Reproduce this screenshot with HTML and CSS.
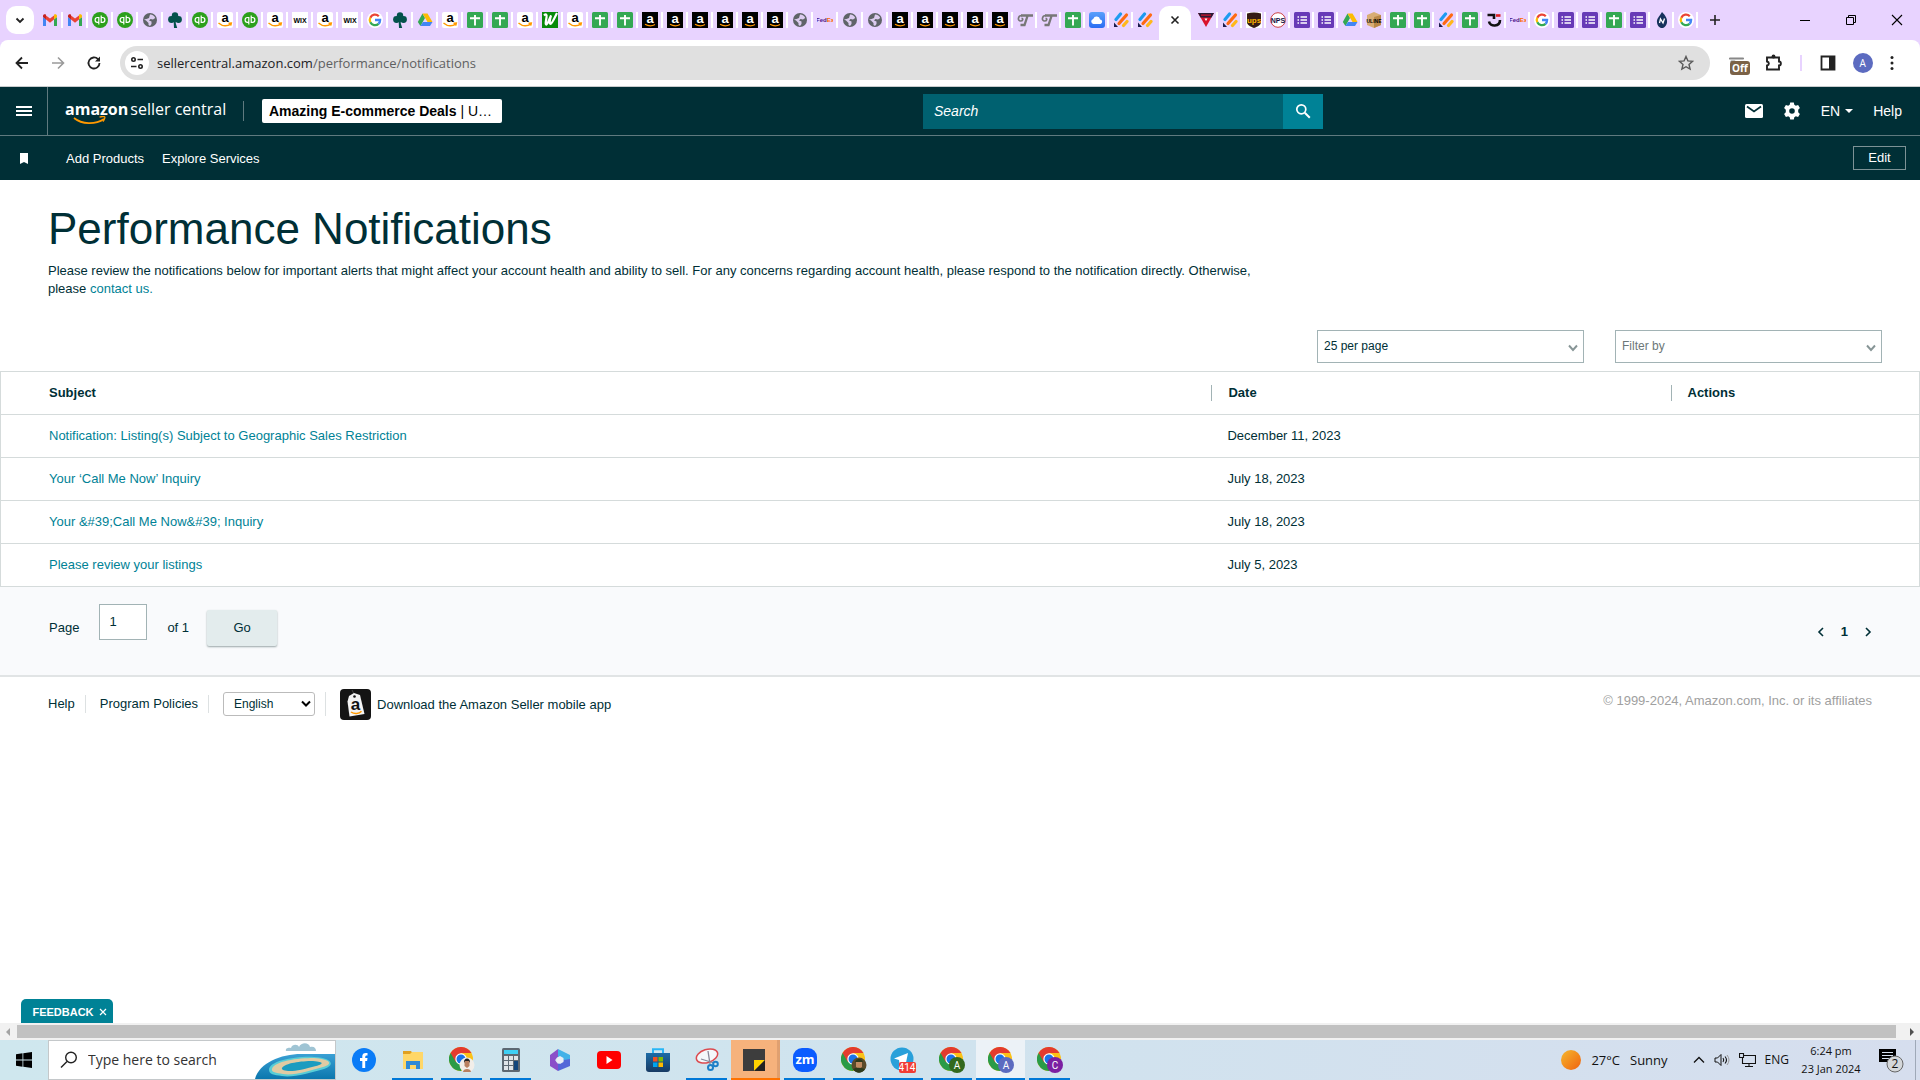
FILE: index.html
```html
<!DOCTYPE html>
<html lang="en">
<head>
<meta charset="utf-8">
<meta name="viewport" content="width=device-width, initial-scale=1">
<title>Performance Notifications</title>
<link rel="stylesheet" href="styles.css">
</head>
<body>
<svg class="paints" aria-hidden="true">
  <defs>
    <linearGradient id="cloudfill" x1="0" y1="0" x2="0" y2="1"><stop offset="0" stop-color="#5aa0fb"/><stop offset="1" stop-color="#2b6df3"/></linearGradient>
    <linearGradient id="sunfill" x1="0" y1="0" x2="1" y2="1"><stop offset="0" stop-color="#f5b82e"/><stop offset="1" stop-color="#f0620f"/></linearGradient>
    <linearGradient id="seafill" x1="0" y1="0" x2="0" y2="1"><stop offset="0" stop-color="#3aa0d4"/><stop offset="1" stop-color="#0b77ae"/></linearGradient>
    <linearGradient id="storefill" x1="0" y1="0" x2="0" y2="1"><stop offset="0" stop-color="#1c6ba6"/><stop offset="1" stop-color="#173a63"/></linearGradient>
  </defs>
</svg>
<svg class="symbols" aria-hidden="true">
  <symbol id="gm" viewBox="0 0 16 16"><path fill="#4285f4" d="M1 14V5l3 2.300V14z"/><path fill="#34a853" d="M12 14V7.300L15 5v9z"/><path fill="#ea4335" d="M4 3.500 8 6.600l4-3.100v4L8 10.700 4 7.500z"/><path fill="#c5221f" d="M1 5V4c0-1.700 1.800-2.200 3-1.300v4.800z"/><path fill="#fbbc04" d="M12 7.500V2.700c1.200-.9 3-.4 3 1.300v1z"/></symbol>
  <symbol id="qb" viewBox="0 0 16 16"><circle cx="8" cy="8" r="8" fill="#2ca01c"/><path d="M6.800 5.500H5.500a2.300 2.300 0 0 0 0 4.800H6.800M6.800 5v7.500M9.200 3.500V11M9.200 5.500h1.300a2.300 2.300 0 0 1 0 4.800H9.200" fill="none" stroke="#fff" stroke-width="1.200"/></symbol>
  <symbol id="gl" viewBox="0 0 16 16"><circle cx="8" cy="8" r="7" fill="#5f6368"/><path fill="#dccbef" d="M8 2.500c2-.2 4.500 1 5.200 3.500L11 7.500 8.500 7 7 8.500l2.500 1V12l-1.500 2-1.500-1V11L4 8.500 2 7.500l2.500-.5L7 6z"/></symbol>
  <symbol id="cl" viewBox="0 0 16 16"><g fill="#04524c"><circle cx="8" cy="3.500" r="3.200"/><circle cx="4.500" cy="7.500" r="3.400"/><circle cx="11.500" cy="7.500" r="3.400"/><path d="M6.500 6h3l-.8 5 1.500 5H7z"/></g></symbol>
  <symbol id="al" viewBox="0 0 16 16"><rect width="16" height="16" rx="2" fill="#fff"/><text x="8" y="10" text-anchor="middle" class="glyph-a">a</text><path d="M1.500 11c4 3.500 9 3.300 12.500.8M11.500 11.300l2.800-.3-.6 2.600" fill="none" stroke="#f90" stroke-width="1.500"/></symbol>
  <symbol id="ad" viewBox="0 0 16 16"><rect width="16" height="16" fill="#000"/><text x="8" y="11" text-anchor="middle" class="glyph-a" fill="#fff">a</text><path d="M3 12.300c3.500 2 7 2 10 .2" fill="none" stroke="#f90" stroke-width="1.200"/></symbol>
  <symbol id="wx" viewBox="0 0 16 16"><rect width="16" height="16" fill="#fff"/><text x="8" y="10.500" text-anchor="middle" class="glyph-xs">WIX</text></symbol>
  <symbol id="gg" viewBox="0 0 16 16"><circle cx="8" cy="8" r="8" fill="#fff"/><g fill="none" stroke-width="2.300"><path stroke="#ea4335" d="M11.800 4.200A5.200 5.200 0 0 0 3.300 5.700"/><path stroke="#fbbc05" d="M3.300 5.700a5.200 5.200 0 0 0 0 4.600"/><path stroke="#34a853" d="M3.300 10.300a5.200 5.200 0 0 0 8.200 1.500"/><path stroke="#4285f4" d="M11.500 11.800A5 5 0 0 0 13.100 8H8"/></g></symbol>
  <symbol id="dr" viewBox="0 0 16 16"><path fill="#34a853" d="M5.500 1.500 8 6 3.500 14 .8 10z"/><path fill="#fbbc04" d="M5.500 1.500h5L15.500 10h-5z"/><path fill="#4285f4" d="M3.300 14 6 10h9.500L13 14z"/></symbol>
  <symbol id="sh" viewBox="0 0 16 16"><rect width="16" height="16" rx="1.500" fill="#34a853"/><path d="M3 6.200h10M8 3v10.500" stroke="#fff" stroke-width="1.900"/></symbol>
  <symbol id="fm" viewBox="0 0 16 16"><rect width="16" height="16" rx="1.500" fill="#673ab7"/><path d="M6.500 5H13M6.500 8H13M6.500 11H13M3.500 5H5M3.500 8H5M3.500 11H5" stroke="#fff" stroke-width="1.500"/></symbol>
  <symbol id="wg" viewBox="0 0 16 16"><rect width="16" height="16" fill="#078a0a"/><path d="M2 3.500c2-2 3-1 2.500 2S3 13 4.500 12.500 8 5 9 3.500C8 7 7 12 8.500 12S13 5 15 1" fill="none" stroke="#fff" stroke-width="2.200"/></symbol>
  <symbol id="fx" viewBox="0 0 16 16"><text x="8" y="10" text-anchor="middle" class="glyph-fx" fill="#4d148c">Fed<tspan fill="#ff6600">Ex</tspan></text></symbol>
  <symbol id="tt" viewBox="0 0 16 16"><path d="M4 3.500h12M10.500 4 7.500 13H3.500" fill="none" stroke="#777" stroke-width="2.300"/><path d="M5 3.500C.5 3.500.5 9 3.500 9 6 9 6.500 6.500 4.500 6.300" fill="none" stroke="#777" stroke-width="1.700"/></symbol>
  <symbol id="ic" viewBox="0 0 16 16"><rect width="16" height="16" rx="3" fill="url(#cloudfill)"/><path fill="#fff" d="M4.500 12a2.600 2.600 0 0 1-.3-5.100 3.600 3.600 0 0 1 6.900.6A2.300 2.300 0 0 1 11.500 12z"/></symbol>
  <symbol id="st" viewBox="0 0 16 16"><g stroke-width="3.200" stroke-linecap="round"><path stroke="#1e9bf0" d="M3 7.500 7.500 2"/><path stroke="#ff6a13" d="M6 11.500 13.500 3"/><path stroke="#ffb81c" d="m10.500 13.500 3.500-4"/></g><path fill="#1b1b4b" d="M1 10.500V15h4z"/></symbol>
  <symbol id="tr" viewBox="0 0 16 16"><path fill="#d9132c" d="M0 1h16L8 15z"/><path fill="#2a1c38" d="M0 1h16l-2.500 4.500h-11z"/><path fill="#d9132c" d="M3 2.500h10v1.200H3z"/><path fill="#fff" d="M6.500 6.500h3L8 9z"/></symbol>
  <symbol id="up" viewBox="0 0 16 16"><path fill="#fff" d="M0 0h16v16H0z"/><path fill="#351c15" d="M1 1.500c5-1.500 9-1.500 14 0V10c0 3-3 4.500-7 6-4-1.500-7-3-7-6z"/><text x="8" y="11" text-anchor="middle" class="glyph-ups" fill="#ffb500">ups</text></symbol>
  <symbol id="np" viewBox="0 0 16 16"><circle cx="8" cy="8" r="7.300" fill="#fff" stroke="#c44" stroke-width="1"/><text x="8" y="10.500" text-anchor="middle" class="glyph-xs" fill="#114">NPS</text></symbol>
  <symbol id="ul" viewBox="0 0 16 16"><path fill="#d8ad74" d="m8 0 7 3v10l-7 3-7-3V3z"/><path fill="#b98848" d="m8 5 7-2v10l-7 3z"/><text x="8" y="11" text-anchor="middle" class="glyph-ul">ULINE</text></symbol>
  <symbol id="tc" viewBox="0 0 16 16"><path d="M1.500 3H8v4M14 8c0 7-10 7-11 1.500" fill="none" stroke="#111" stroke-width="2.600"/><path d="M10 3.500h4.500" stroke="#d22" stroke-width="2.600"/></symbol>
  <symbol id="nl" viewBox="0 0 16 16"><path fill="#16325c" d="M8 0c4 4 5.500 7 5 10.500S10 16 8 16s-4.500-1.500-5-5.500S5 5 8 0z"/><path d="m5.500 11 1-4 2.500 4 1.500-4.500" fill="none" stroke="#fff" stroke-width="1.300"/></symbol>
  <symbol id="chrome" viewBox="0 0 24 24"><circle cx="12" cy="12" r="12" fill="#fbc116"/><path fill="#2a9b47" d="M1.600 6A12 12 0 0 0 12 24l5.200-9z"/><path fill="#e33b2e" d="M1.600 6 6.800 15 12 6h10.400A12 12 0 0 0 1.600 6z"/><circle cx="12" cy="12" r="5.700" fill="#fff"/><circle cx="12" cy="12" r="4.500" fill="#1a73e8"/></symbol>
</svg>

<header class="browser">
  <div class="tabstrip">
    <button class="tab-search" aria-label="Search tabs"><svg width="12" height="12" viewBox="0 0 12 12"><path d="m2.500 4.500 3.500 3.500 3.500-3.500" fill="none" stroke="#222" stroke-width="1.800"/></svg></button>
    <div class="tabs">
      <button class="tab" aria-label="Gmail"><svg><use href="#gm"/></svg></button>
      <button class="tab" aria-label="Gmail"><svg><use href="#gm"/></svg></button>
      <button class="tab" aria-label="QuickBooks"><svg><use href="#qb"/></svg></button>
      <button class="tab" aria-label="QuickBooks"><svg><use href="#qb"/></svg></button>
      <button class="tab" aria-label="Website"><svg><use href="#gl"/></svg></button>
      <button class="tab" aria-label="Clover"><svg><use href="#cl"/></svg></button>
      <button class="tab" aria-label="QuickBooks"><svg><use href="#qb"/></svg></button>
      <button class="tab" aria-label="Amazon"><svg><use href="#al"/></svg></button>
      <button class="tab" aria-label="QuickBooks"><svg><use href="#qb"/></svg></button>
      <button class="tab" aria-label="Amazon"><svg><use href="#al"/></svg></button>
      <button class="tab" aria-label="Wix"><svg><use href="#wx"/></svg></button>
      <button class="tab" aria-label="Amazon"><svg><use href="#al"/></svg></button>
      <button class="tab" aria-label="Wix"><svg><use href="#wx"/></svg></button>
      <button class="tab" aria-label="Google"><svg><use href="#gg"/></svg></button>
      <button class="tab" aria-label="Clover"><svg><use href="#cl"/></svg></button>
      <button class="tab" aria-label="Drive"><svg><use href="#dr"/></svg></button>
      <button class="tab" aria-label="Amazon"><svg><use href="#al"/></svg></button>
      <button class="tab" aria-label="Sheets"><svg><use href="#sh"/></svg></button>
      <button class="tab" aria-label="Sheets"><svg><use href="#sh"/></svg></button>
      <button class="tab" aria-label="Amazon"><svg><use href="#al"/></svg></button>
      <button class="tab" aria-label="Web store"><svg><use href="#wg"/></svg></button>
      <button class="tab" aria-label="Amazon"><svg><use href="#al"/></svg></button>
      <button class="tab" aria-label="Sheets"><svg><use href="#sh"/></svg></button>
      <button class="tab" aria-label="Sheets"><svg><use href="#sh"/></svg></button>
      <button class="tab" aria-label="Seller Central"><svg><use href="#ad"/></svg></button>
      <button class="tab" aria-label="Seller Central"><svg><use href="#ad"/></svg></button>
      <button class="tab" aria-label="Seller Central"><svg><use href="#ad"/></svg></button>
      <button class="tab" aria-label="Seller Central"><svg><use href="#ad"/></svg></button>
      <button class="tab" aria-label="Seller Central"><svg><use href="#ad"/></svg></button>
      <button class="tab" aria-label="Seller Central"><svg><use href="#ad"/></svg></button>
      <button class="tab" aria-label="Website"><svg><use href="#gl"/></svg></button>
      <button class="tab" aria-label="FedEx"><svg><use href="#fx"/></svg></button>
      <button class="tab" aria-label="Website"><svg><use href="#gl"/></svg></button>
      <button class="tab" aria-label="Website"><svg><use href="#gl"/></svg></button>
      <button class="tab" aria-label="Seller Central"><svg><use href="#ad"/></svg></button>
      <button class="tab" aria-label="Seller Central"><svg><use href="#ad"/></svg></button>
      <button class="tab" aria-label="Seller Central"><svg><use href="#ad"/></svg></button>
      <button class="tab" aria-label="Seller Central"><svg><use href="#ad"/></svg></button>
      <button class="tab" aria-label="Seller Central"><svg><use href="#ad"/></svg></button>
      <button class="tab narrow" aria-label="T store"><svg><use href="#tt"/></svg></button>
      <button class="tab narrow" aria-label="T store"><svg><use href="#tt"/></svg></button>
      <button class="tab narrow" aria-label="Sheets"><svg><use href="#sh"/></svg></button>
      <button class="tab narrow" aria-label="iCloud"><svg><use href="#ic"/></svg></button>
      <button class="tab narrow" aria-label="Jungle Scout"><svg><use href="#st"/></svg></button>
      <button class="tab narrow last" aria-label="Jungle Scout"><svg><use href="#st"/></svg></button>
      <button class="tab active" aria-label="Close tab"><svg width="10" height="10" viewBox="0 0 10 10"><path d="m1.500 1.500 7 7m0-7-7 7" stroke="#222" stroke-width="1.600"/></svg></button>
      <button class="tab narrow" aria-label="Supplier"><svg><use href="#tr"/></svg></button>
      <button class="tab narrow" aria-label="Jungle Scout"><svg><use href="#st"/></svg></button>
      <button class="tab narrow" aria-label="UPS"><svg><use href="#up"/></svg></button>
      <button class="tab narrow" aria-label="NPS"><svg><use href="#np"/></svg></button>
      <button class="tab narrow" aria-label="Forms"><svg><use href="#fm"/></svg></button>
      <button class="tab narrow" aria-label="Forms"><svg><use href="#fm"/></svg></button>
      <button class="tab narrow" aria-label="Drive"><svg><use href="#dr"/></svg></button>
      <button class="tab narrow" aria-label="Uline"><svg><use href="#ul"/></svg></button>
      <button class="tab narrow" aria-label="Sheets"><svg><use href="#sh"/></svg></button>
      <button class="tab narrow" aria-label="Sheets"><svg><use href="#sh"/></svg></button>
      <button class="tab narrow" aria-label="Jungle Scout"><svg><use href="#st"/></svg></button>
      <button class="tab narrow" aria-label="Sheets"><svg><use href="#sh"/></svg></button>
      <button class="tab narrow" aria-label="Courier"><svg><use href="#tc"/></svg></button>
      <button class="tab narrow" aria-label="FedEx"><svg><use href="#fx"/></svg></button>
      <button class="tab narrow" aria-label="Google"><svg><use href="#gg"/></svg></button>
      <button class="tab narrow" aria-label="Forms"><svg><use href="#fm"/></svg></button>
      <button class="tab narrow" aria-label="Forms"><svg><use href="#fm"/></svg></button>
      <button class="tab narrow" aria-label="Sheets"><svg><use href="#sh"/></svg></button>
      <button class="tab narrow" aria-label="Forms"><svg><use href="#fm"/></svg></button>
      <button class="tab narrow" aria-label="NL"><svg><use href="#nl"/></svg></button>
      <button class="tab narrow" aria-label="Google"><svg><use href="#gg"/></svg></button>
    </div>
    <button class="new-tab" aria-label="New tab"><svg width="12" height="12" viewBox="0 0 12 12"><path d="M6 1v10M1 6h10" stroke="#222" stroke-width="1.600"/></svg></button>
    <div class="window-buttons">
      <button aria-label="Minimize"><svg width="12" height="12" viewBox="0 0 12 12"><path d="M1 6.500h10" stroke="#000"/></svg></button>
      <button aria-label="Restore"><svg width="12" height="12" viewBox="0 0 12 12"><path d="M1.500 3.500h7v7h-7zM3.500 3.500v-2h7v7h-2" fill="none" stroke="#000"/></svg></button>
      <button aria-label="Close"><svg width="12" height="12" viewBox="0 0 12 12"><path d="m1 1 10 10M11 1 1 11" stroke="#000" stroke-width="1.100"/></svg></button>
    </div>
  </div>
  <div class="toolbar">
    <button class="nav-btn" aria-label="Back"><svg width="16" height="16" viewBox="0 0 16 16"><path d="M14 8H2.500M8 2.500 2.500 8 8 13.500" fill="none" stroke="#222" stroke-width="1.800"/></svg></button>
    <button class="nav-btn" aria-label="Forward"><svg width="16" height="16" viewBox="0 0 16 16"><path d="M2 8h11.500M8 2.500 13.500 8 8 13.500" fill="none" stroke="#9a9a9a" stroke-width="1.600"/></svg></button>
    <button class="nav-btn" aria-label="Reload"><svg width="16" height="16" viewBox="0 0 16 16"><path d="M13.500 8A5.500 5.500 0 1 1 12 4.200l1 1" fill="none" stroke="#222" stroke-width="1.800"/><path d="M14 1.500V6.500H9z" fill="#222"/></svg></button>
    <div class="omnibox">
      <button class="site-info" aria-label="Site information"><svg width="14" height="14" viewBox="0 0 14 14"><g fill="none" stroke="#222" stroke-width="1.600"><circle cx="3.500" cy="3.500" r="1.700"/><path d="M7.500 3.500H13M1 10.500h5.500"/><circle cx="10.500" cy="10.500" r="1.700"/></g></svg></button>
      <a class="url" href="#"><span>sellercentral.amazon.com</span>/performance/notifications</a>
      <button class="star" aria-label="Bookmark this tab"><svg width="16" height="16" viewBox="0 0 16 16"><path d="m8 1.500 1.900 4.400 4.700.4L11 9.500l1.100 4.600L8 11.700l-4.100 2.400L5 9.500 1.400 6.300l4.700-.4z" fill="none" stroke="#5a5a5a" stroke-width="1.400"/></svg></button>
    </div>
    <div class="toolbar-right">
      <button class="ext" aria-label="Extension"><svg width="18" height="20" viewBox="0 0 18 20"><path d="M1 5.500h13M2.500 8.500h3" fill="none" stroke="#888" stroke-width="2.200" stroke-linecap="round"/></svg><span class="off">Off</span></button>
      <button class="puzzle" aria-label="Extensions"><svg width="18" height="18" viewBox="0 0 18 18"><path d="M2 3.500h12v4c2.500 0 2.500 4 0 4v4H2v-4c2.500-.5 2.500-3.500 0-4z" fill="none" stroke="#222" stroke-width="1.900"/><circle cx="8.500" cy="2.500" r="1.900" fill="#222"/></svg></button>
      <span class="tb-sep"></span>
      <button aria-label="Side panel"><svg width="16" height="16" viewBox="0 0 16 16"><path d="M1.500 1.500h13v13h-13z" fill="none" stroke="#222" stroke-width="1.800"/><path d="M9 1.500h5.500v13H9z" fill="#222"/></svg></button>
      <button class="avatar" aria-label="Profile">A</button>
      <button class="menu" aria-label="Menu"><svg width="4" height="16" viewBox="0 0 4 16"><g fill="#222"><circle cx="2" cy="2.500" r="1.500"/><circle cx="2" cy="8" r="1.500"/><circle cx="2" cy="13.500" r="1.500"/></g></svg></button>
    </div>
  </div>
</header>

<div class="page">
  <nav class="topbar">
    <button class="hamburger" aria-label="Menu"><span></span><span></span><span></span></button>
    <a class="logo" href="#" aria-label="amazon seller central"><b>amazon</b><span>seller central</span><svg class="smile" width="34" height="9" viewBox="0 0 34 9"><path d="M1 2c8 6.500 21 7 30 1" fill="none" stroke="#f90" stroke-width="1.700"/><path d="M26.500 1.200c2-1 5-.8 5.300-.2s-.6 3.500-2 4.600" fill="none" stroke="#f90" stroke-width="1.300"/></svg></a>
    <span class="logo-sep"></span>
    <button class="account"><b>Amazing E-commerce Deals</b> | U…</button>
    <form class="search">
      <input type="text" placeholder="Search" aria-label="Search">
      <button type="button" aria-label="Submit search"><svg width="16" height="16" viewBox="0 0 16 16"><circle cx="6.300" cy="6.300" r="4.500" fill="none" stroke="#fff" stroke-width="1.700"/><path d="m9.800 9.800 5 5" stroke="#fff" stroke-width="2"/></svg></button>
    </form>
    <div class="top-links">
      <a href="#" aria-label="Messages"><svg width="18" height="14" viewBox="0 0 18 14"><rect width="18" height="14" rx="1.500" fill="#fff"/><path d="m2 2.500 7 5 7-5" fill="none" stroke="#002f36" stroke-width="1.700"/></svg></a>
      <a href="#" aria-label="Settings"><svg width="18" height="18" viewBox="0 0 18 18"><path fill="#fff" fill-rule="evenodd" d="M7.200.5h3.600l.5 2.300 1.500.9 2.300-.8 1.800 3.200-1.700 1.600v2.600l1.700 1.600-1.800 3.200-2.300-.8-1.500.9-.5 2.300H7.200l-.5-2.300-1.500-.9-2.300.8-1.800-3.200 1.700-1.600V7.700L1.100 6.100l1.800-3.200 2.300.8 1.500-.9zM9 6.200a2.800 2.800 0 1 0 0 5.600 2.800 2.800 0 0 0 0-5.600z"/></svg></a>
      <a class="lang" href="#">EN <svg width="8" height="4" viewBox="0 0 8 4"><path fill="#fff" d="M0 0h8L4 4z"/></svg></a>
      <a href="#">Help</a>
    </div>
  </nav>
  <nav class="subbar">
    <svg class="bookmark" width="8" height="11" viewBox="0 0 8 11"><path fill="#fff" d="M0 0h8v11L4 9l-4 2z"/></svg>
    <a href="#">Add Products</a>
    <a href="#">Explore Services</a>
    <button class="edit">Edit</button>
  </nav>

  <main>
    <section class="intro">
      <h1>Performance Notifications</h1>
      <p>Please review the notifications below for important alerts that might affect your account health and ability to sell. For any concerns regarding account health, please respond to the notification directly. Otherwise, please <a href="#">contact us.</a></p>
    </section>
    <div class="filters">
      <div class="pick"><select aria-label="Rows per page"><option>25 per page</option></select><svg width="10" height="8" viewBox="0 0 10 8"><path d="m1 1.500 4 4.500 4-4.500" fill="none" stroke="#879596" stroke-width="1.900"/></svg></div>
      <div class="pick muted"><select aria-label="Filter by"><option>Filter by</option></select><svg width="10" height="8" viewBox="0 0 10 8"><path d="m1 1.500 4 4.500 4-4.500" fill="none" stroke="#879596" stroke-width="1.900"/></svg></div>
    </div>
    <table class="grid">
      <colgroup><col class="c-subject"><col class="c-date"><col class="c-actions"></colgroup>
      <thead><tr><th>Subject</th><th><span>Date</span></th><th><span>Actions</span></th></tr></thead>
      <tbody>
        <tr><td><a href="#">Notification: Listing(s) Subject to Geographic Sales Restriction</a></td><td>December 11, 2023</td><td></td></tr>
        <tr><td><a href="#">Your ‘Call Me Now’ Inquiry</a></td><td>July 18, 2023</td><td></td></tr>
        <tr><td><a href="#">Your &amp;#39;Call Me Now&amp;#39; Inquiry</a></td><td>July 18, 2023</td><td></td></tr>
        <tr><td><a href="#">Please review your listings</a></td><td>July 5, 2023</td><td></td></tr>
      </tbody>
    </table>
    <div class="pager">
      <label for="pageno">Page</label>
      <input id="pageno" type="text" value="1">
      <span class="of">of 1</span>
      <button class="go">Go</button>
      <div class="pages">
        <button aria-label="Previous page"><svg width="8" height="10" viewBox="0 0 8 10"><path d="M6 1 2 5l4 4" fill="none" stroke="#002f36" stroke-width="1.600"/></svg></button>
        <b>1</b>
        <button aria-label="Next page"><svg width="8" height="10" viewBox="0 0 8 10"><path d="m2 1 4 4-4 4" fill="none" stroke="#002f36" stroke-width="1.600"/></svg></button>
      </div>
    </div>
  </main>

  <footer class="site-footer">
    <a class="cell" href="#">Help</a>
    <a class="cell" href="#">Program Policies</a>
    <div class="cell"><div class="lang-pick"><select aria-label="Language"><option>English</option></select><svg width="10" height="8" viewBox="0 0 10 8"><path d="m1 1.500 4 4 4-4" fill="none" stroke="#000" stroke-width="2"/></svg></div></div>
    <a class="app" href="#"><svg width="31" height="31" viewBox="0 0 31 31"><rect width="31" height="31" rx="4" fill="#141414"/><path d="M12 1l3 6" stroke="#444"/><path fill="#f4f4f4" d="m9 7 5-3 6 2 4.500 19-15 2.500-2-15z"/><circle cx="14.500" cy="7.500" r="1.300" fill="#141414"/><text x="15.500" y="21" text-anchor="middle" class="glyph-app">a</text><path d="M11 23c3.500 2.500 8 2 10.500-.8" fill="none" stroke="#f90" stroke-width="1.500"/></svg>Download the Amazon Seller mobile app</a>
    <span class="copy">© 1999-2024, Amazon.com, Inc. or its affiliates</span>
  </footer>
  <button class="feedback">FEEDBACK <svg width="8" height="8" viewBox="0 0 8 8"><path d="m1 1 6 6m0-6-6 6" stroke="#fff" stroke-width="1.200"/></svg></button>
</div>

<div class="hscroll" aria-hidden="true">
  <svg width="17" height="17" viewBox="0 0 17 17"><path fill="#a3a3a3" d="M10 5v8L6 9z"/></svg>
  <div class="thumb"></div>
  <svg class="end" width="24" height="17" viewBox="0 0 24 17"><path fill="#505050" d="M14 5v8l4-4z"/></svg>
</div>

<footer class="taskbar">
  <button class="start" aria-label="Start"><svg width="16" height="16" viewBox="0 0 16 16"><path d="M0 2.200 6.500 1.300V7.600H0zM7.300 1.200 16 0v7.600H7.300zM0 8.400h6.500v6.300L0 13.800zM7.300 8.400H16V16l-8.700-1.200z"/></svg></button>
  <label class="win-search">
    <svg width="18" height="18" viewBox="0 0 18 18"><circle cx="11" cy="6.500" r="5.300" fill="none" stroke="#222" stroke-width="1.400"/><path d="m7 10.500-6 6" stroke="#222" stroke-width="1.400"/></svg>
    <input type="text" placeholder="Type here to search">
    <svg class="island" width="80" height="38" viewBox="0 0 80 38"><path fill="#9fc4d4" d="M31 10c-1-3 3-4 5-3 1-4 7-4 8-1 2-5 10-5 11 0 4-1 6 1 6 4z"/><path fill="url(#seafill)" d="M0 38C4 22 26 13 46 13h34v25z"/><path fill="#58cdd6" d="M14 29c0-9 26-14 45-13 18 1 22 8 10 12-14 4-32 9-42 7-8-1-13-2-13-6z"/><path fill="#e0cba3" d="M17 28c2-8 26-11 42-11 16 1 20 6 9 9-14 4-30 9-40 7-7-1-12-2-11-5z"/><path fill="#1b9cc0" d="M27 27c3-5 19-7 31-7 12 1 10 3 3 5-11 3-20 5-26 5-5 0-9-1-8-3z"/></svg>
  </label>
  <div class="apps">
    <button aria-label="Facebook"><svg width="24" height="24" viewBox="0 0 24 24"><circle cx="12" cy="12" r="12" fill="#0a7cf7"/><path fill="#fff" d="M10.300 20v-7H8v-3h2.300V8.300C10.300 5.500 12 4.500 15.500 5v2.600c-2-.1-2.300.3-2.300 2.400h2.300l-.4 3h-1.900v7z"/></svg></button>
    <button class="run" aria-label="File Explorer"><svg width="24" height="24" viewBox="0 0 24 24"><path fill="#e0a021" d="M2 3h8l2 3H2z"/><path fill="#ffd768" d="M2 6V21h20V4H11L9 6z"/><path fill="#2f8ad6" d="M5 21v-8h14v8h-4v-4H9v4z"/></svg></button>
    <button class="run" aria-label="Chrome"><svg width="26" height="26" viewBox="0 0 26 26"><use href="#chrome" width="24" height="24"/><circle cx="18" cy="18" r="7.500" fill="#f2eee9"/><path fill="#b98060" d="M14 25c0-4 8-4 8 0zM15.500 14h5v5l-2.500 2-2.500-2z"/><path fill="#222" d="M15 16c-1-6 7-6 6 0l-1-2h-4z"/></svg></button>
    <button class="run" aria-label="Calculator"><svg width="18" height="24" viewBox="0 0 18 24"><rect width="18" height="24" rx="1.500" fill="#5d6872"/><path fill="#3fd0f5" d="M2 2h14v4H2z"/><g fill="#dfe4e8"><path d="M2 8h4v4H2zM7 8h4v4H7zM12 8h4v4h-4zM2 13h4v4H2zM7 13h4v4H7zM2 18h4v4H2zM7 18h4v4H7z"/></g><path fill="#12467c" d="M12 13h4v9h-4z"/></svg></button>
    <button aria-label="Microsoft 365"><svg width="24" height="24" viewBox="0 0 24 24"><path fill="#8a4fc9" d="M2 7 10 1v8l-3 3 3 4v7l-8-5z"/><path fill="#42b2e8" d="m10 1 12 6v6l-7-1-5-3z"/><path fill="#5467d8" d="m22 11v7l-12 5v-7l6-4z"/><path fill="#e8edf5" d="m12 8 3.500 2v4L12 16l-3.500-2v-4z"/></svg></button>
    <button aria-label="YouTube"><svg width="24" height="18" viewBox="0 0 24 18"><rect width="24" height="18" rx="4" fill="#f00"/><path fill="#fff" d="m9.500 5 6 4-6 4z"/></svg></button>
    <button aria-label="Microsoft Store"><svg width="24" height="24" viewBox="0 0 24 24"><path d="M7 5V1.200h10V5" fill="none" stroke="#29b6f6" stroke-width="2"/><path fill="url(#storefill)" d="M0 5h24v16q0 3-3 3H3q-3 0-3-3z"/><path fill="#f25022" d="M7 9h4.500v4.500H7z"/><path fill="#7fba00" d="M12.500 9H17v4.500h-4.500z"/><path fill="#00a4ef" d="M7 14.500h4.500V19H7z"/><path fill="#ffb900" d="M12.500 14.500H17V19h-4.500z"/></svg></button>
    <button class="run" aria-label="Snipping Tool"><svg width="24" height="24" viewBox="0 0 24 24"><ellipse cx="12" cy="8" rx="11" ry="6.500" fill="#f4f7fa" stroke="#dc4a4f" stroke-width="1.500" transform="rotate(-18 12 8)"/><path d="M13 3l2 13M6 11l13 4" stroke="#889" stroke-width="1.300"/><g fill="none" stroke="#1c7fc7" stroke-width="2"><circle cx="15.500" cy="19.500" r="2.500"/><circle cx="20.500" cy="16" r="2.300"/></g></svg></button>
    <button class="run alert" aria-label="Sticky Notes"><svg width="22" height="22" viewBox="0 0 22 22"><path fill="#3d3d3d" d="M0 0h22v11L11 22H0z"/><path fill="#ffd400" d="M11 11h11L11 22z"/><path fill="#222" d="M22 11v11H11z"/></svg></button>
    <button class="run" aria-label="Zoom"><svg width="24" height="24" viewBox="0 0 24 24"><rect width="24" height="24" rx="9" fill="#0b5cff"/><text x="12" y="16" text-anchor="middle" class="glyph-zm">zm</text></svg></button>
    <button class="run" aria-label="Chrome"><svg width="26" height="26" viewBox="0 0 26 26"><use href="#chrome" width="24" height="24"/><circle cx="18" cy="18" r="7.500" fill="#5a4a2a"/><path fill="#c08a60" d="M15 15h6v5l-3 2-3-2z"/><path fill="#2c3a1c" d="M12 22c4-2 8-1 12 0-3 5-9 5-12 0zM14 15c1-4 7-4 8 0z"/></svg></button>
    <button class="run" aria-label="Telegram"><svg width="26" height="26" viewBox="0 0 26 26"><circle cx="12" cy="12" r="11.500" fill="#29a0da"/><path fill="#fff" d="M4 11.500 18 6l-2.500 12-4-3-2 2-.5-4z"/><rect x="9" y="15" width="17" height="11" rx="2" fill="#f23c34"/><text x="17" y="24" text-anchor="middle" class="glyph-badge">414</text></svg></button>
    <button class="run" aria-label="Chrome, profile A"><svg width="26" height="26" viewBox="0 0 26 26"><use href="#chrome" width="24" height="24"/><circle cx="18" cy="18" r="8" fill="#33691e"/><text x="18" y="22" text-anchor="middle" class="glyph-badge">A</text></svg></button>
    <button class="run current" aria-label="Chrome, profile A"><svg width="26" height="26" viewBox="0 0 26 26"><use href="#chrome" width="24" height="24"/><circle cx="18" cy="18" r="8" fill="#5c6bc0"/><text x="18" y="22" text-anchor="middle" class="glyph-badge">A</text></svg></button>
    <button class="run" aria-label="Chrome, profile C"><svg width="26" height="26" viewBox="0 0 26 26"><use href="#chrome" width="24" height="24"/><circle cx="18" cy="18" r="8" fill="#7b1fa2"/><text x="18" y="22" text-anchor="middle" class="glyph-badge">C</text></svg></button>
  </div>
  <div class="tray">
    <button class="weather"><svg width="20" height="20" viewBox="0 0 20 20"><circle cx="10" cy="10" r="10" fill="url(#sunfill)"/></svg><span>27°C</span><span>Sunny</span></button>
    <button aria-label="Show hidden icons"><svg width="12" height="8" viewBox="0 0 12 8"><path d="m1 6.500 5-5 5 5" fill="none" stroke="#111" stroke-width="1.300"/></svg></button>
    <button aria-label="Volume"><svg width="16" height="14" viewBox="0 0 16 14"><path d="M1 5h2.500L7 1.500v11L3.500 9H1z" fill="none" stroke="#111"/><path d="M9 5q1.500 2 0 4M11 3.500q3 3.500 0 7" fill="none" stroke="#111" stroke-width="1.100"/><path d="M13 2q4 5 0 10" fill="none" stroke="#999"/></svg></button>
    <button aria-label="Network"><svg width="17" height="14" viewBox="0 0 17 14"><path d="M5 2.500h11.500v8H3.500V5M6 13.500h8M10 10.500v3M.5.500h4v4h-4z" fill="none" stroke="#111" stroke-width="1.100"/></svg></button>
    <button class="ime">ENG</button>
    <button class="clock"><span>6:24 pm</span><span>23 Jan 2024</span></button>
    <button class="notif" aria-label="Notifications"><svg width="26" height="26" viewBox="0 0 26 26"><path d="M1 2h17v13h-3v4l-5-4H1z"/><path d="M4 5.500h11M4 8.500h11M4 11.500h7" stroke="#d5dfee" stroke-width="1.200"/><circle cx="17" cy="17" r="8" fill="#d4d7da" stroke="#666"/><text x="17" y="21" text-anchor="middle" class="glyph-count">2</text></svg></button>
  </div>
</footer>
</body>
</html>
```
FILE: styles.css
```css
* { box-sizing: border-box; }
body {
  margin: 0;
  min-height: 100vh;
  display: flex;
  flex-direction: column;
  background: #fff;
  color: #002f36;
  font: 13px/18px "Liberation Sans", Arial, sans-serif;
}
button, input, select { font: inherit; color: inherit; border: 0; padding: 0; margin: 0; background: none; border-radius: 0; }
button { display: flex; align-items: center; justify-content: center; }
a { color: inherit; text-decoration: none; }
svg { display: block; flex: none; }
.paints { position: absolute; width: 0; height: 0; }
.symbols { display: none; }

/* small lettering inside icons */
.glyph-a { font: bold 13px "Liberation Sans", sans-serif; }
.glyph-xs { font: bold 7px "Liberation Sans", sans-serif; }
.glyph-fx { font: bold 6px "Liberation Sans", sans-serif; }
.glyph-ups { font: bold 8px "Liberation Sans", sans-serif; }
.glyph-ul { font: bold 5px "Liberation Sans", sans-serif; }
.glyph-app { font: bold 17px "Liberation Sans", sans-serif; fill: #111; }
.glyph-zm { font: bold 13px "Open Sans", sans-serif; fill: #fff; }
.glyph-badge { font: 10px Roboto, sans-serif; fill: #fff; }
.glyph-count { font: 12px "Open Sans", sans-serif; fill: #111; }

/* browser frame */
.browser { background: #e8d3ff; font-family: "Open Sans", sans-serif; }
.tabstrip { display: flex; align-items: center; height: 40px; }
.tab-search { width: 28px; height: 28px; margin: 0 4px 0 6px; border-radius: 10px; background: #fff; }
.tabs { display: flex; align-items: center; height: 40px; }
.tab { width: 25px; height: 16px; border-right: 2px solid #fff; padding-left: 1px; flex: none; }
.tab svg { width: 16px; height: 16px; }
.tab.narrow { width: 24px; }
.tab.last { border-right-color: transparent; }
.tab.active { width: 32px; height: 34px; margin: 0 3px 0 2px; align-self: flex-end; border: 0; border-radius: 10px 10px 0 0; background: #fff; padding: 0 0 6px; }
.tab.active svg { width: 10px; height: 10px; }
.new-tab { width: 28px; height: 28px; margin-left: 3px; }
.window-buttons { display: flex; margin-left: auto; }
.window-buttons button { width: 46px; height: 40px; }
.toolbar { display: flex; align-items: center; height: 47px; padding: 0 14px 0 4px; background: #fff; border-bottom: 1px solid #c8cccd; border-radius: 8px 8px 0 0; }
.nav-btn { width: 36px; height: 36px; }
.omnibox { flex: 1; display: flex; align-items: center; height: 34px; margin-left: 8px; padding: 0 16px 0 5px; border-radius: 17px; background: #e0e0e0; }
.site-info { width: 24px; height: 24px; border-radius: 12px; background: #fff; }
.url { margin-left: 8px; flex: 1; font-size: 13px; color: #5f6062; }
.url span { color: #202124; }
.toolbar-right { display: flex; align-items: center; width: 196px; padding: 0 6px 0 18px; justify-content: space-between; }
.ext { position: relative; width: 20px; height: 24px; }
.off { position: absolute; left: 2px; top: 10px; padding: 0 2px; border-radius: 3px; background: #7b6247; color: #fff; font: bold 10px/14px "Open Sans", sans-serif; }
.tb-sep { width: 2px; height: 16px; background: #e8d3ff; }
.avatar { width: 20px; height: 20px; border-radius: 10px; background: #5c6bc0; color: #fff; font-size: 10px; }
.toolbar-right { padding-right: 6px; margin-right: 0; }
.toolbar-right .menu { margin-right: 6px; }

/* seller central bars */
.page { flex: 1; display: flex; flex-direction: column; }
.topbar { display: flex; align-items: center; height: 49px; background: #002f36; border-bottom: 1px solid #5f7a7f; color: #fff; font-size: 14px; }
.hamburger { flex-direction: column; gap: 2px; width: 48px; height: 48px; border-right: 1px solid #5f7a7f; }
.hamburger span { width: 16px; height: 2px; background: #fff; }
.logo { position: relative; display: flex; align-items: baseline; gap: 2px; width: 160px; margin-left: 17px; padding-bottom: 4px; font: 16px/20px "Open Sans", sans-serif; white-space: nowrap; }
.smile { position: absolute; left: 8px; top: 17px; }
.logo-sep { width: 1px; height: 20px; margin-left: 18px; background: #5f7a7f; }
.account { width: 240px; height: 24px; margin-left: 18px; padding: 0 7px; border-radius: 2px; background: #fff; color: #000; justify-content: flex-start; white-space: pre; }
.search { display: flex; width: 400px; height: 35px; margin: 0 auto 0 421px; }
.search input { flex: 1; padding: 0 11px; background: #006170; color: #fff; font-style: italic; min-width: 0; }
.search input::placeholder { color: #fff; opacity: 1; }
.search button { width: 40px; background: #008296; }
.top-links { display: flex; align-items: center; gap: 20px; padding-right: 18px; }
.lang { display: flex; align-items: center; gap: 5px; }
.subbar { display: flex; align-items: center; gap: 18px; height: 44px; padding: 0 14px 0 20px; background: #002f36; color: #fff; }
.subbar a { padding-top: 2px; }
.bookmark { margin-right: 20px; }
.edit { width: 53px; height: 24px; margin-left: auto; border: 1px solid #7d9296; }

/* notifications */
.intro { padding: 23px 48px 0; }
.intro h1 { margin: 0; font-size: 44px; font-weight: 400; line-height: 52px; }
.intro p { max-width: 1220px; margin: 7px 0 0; }
.intro a, .grid a { color: #008296; }
.filters { display: flex; justify-content: flex-end; gap: 31px; padding: 32px 38px 8px; font-size: 12px; }
.pick { display: grid; width: 267px; align-items: center; }
.pick select { grid-area: 1 / 1; appearance: none; height: 33px; padding: 0 6px 2px; border: 1px solid #a2b3b5; color: #002f36; background: #fff; }
.pick.muted select { color: #6c7778; }
.pick svg { grid-area: 1 / 1; justify-self: end; margin: 3px 6px 0 0; pointer-events: none; }
.grid { width: 100%; table-layout: fixed; border-collapse: collapse; border: 1px solid #d5dbdb; }
.grid .c-subject { width: 63%; }
.grid .c-actions { width: 251px; }
.grid th, .grid td { height: 43px; padding: 0 0 0 18px; border-bottom: 1px solid #d5dbdb; text-align: left; }
.grid th:first-child, .grid td:first-child { padding-left: 48px; }
.grid th span { display: block; line-height: 16px; margin-left: -16px; padding-left: 16px; border-left: 1px solid #a2b3b5; }
.pager { display: flex; align-items: center; height: 90px; padding: 0 48px 6px 49px; background: #f9fafc; border-bottom: 2px solid #e1e4e5; }
.pager input { width: 48px; height: 36px; margin: 17px 20px 0; padding: 0 9px 2px; border: 1px solid #a2b3b5; background: #fff; align-self: flex-start; }
.go { width: 70px; height: 36px; margin-left: 18px; border-radius: 2px; background: #e3eced; box-shadow: 0 1px 2px #9aa6a8; }
.pages { display: flex; gap: 16px; margin-left: auto; padding-top: 7px; }
.site-footer { display: flex; align-items: center; padding: 12px 48px 0; }
.cell { padding-right: 10px; margin: 0 14px 2px 0; border-right: 1px solid #dde1e2; }
.lang-pick { display: grid; align-items: center; }
.lang-pick select { grid-area: 1 / 1; appearance: none; width: 92px; height: 24px; padding: 0 10px; border: 1px solid #bbb; border-radius: 3px; background: #fff; color: #002f36; font-size: 12px; }
.lang-pick svg { grid-area: 1 / 1; justify-self: end; margin-right: 4px; pointer-events: none; }
.app { display: flex; align-items: center; gap: 6px; }
.copy { margin-left: auto; padding-bottom: 8px; color: #a0a0a0; }
.feedback { gap: 5px; width: 92px; height: 24px; margin: auto 0 0 21px; padding: 2px 0 0 5px; border-radius: 5px 5px 0 0; background: #008296; color: #fff; font-size: 11px; font-weight: bold; }

/* horizontal scroll bar */
.hscroll { display: flex; align-items: center; height: 17px; background: #f1f1f1; }
.thumb { flex: 1; height: 13px; background: #c1c1c1; }

/* desktop task bar */
.taskbar { display: flex; align-items: center; height: 40px; background: linear-gradient(90deg, #cfe7ee, #d0e3ee 50%, #d6deee); color: #111; font: 14px/18px "Open Sans", sans-serif; }
.start { width: 48px; height: 40px; }
.win-search { display: flex; align-items: center; width: 288px; height: 40px; padding-left: 11px; border: 1px solid #c4c8ca; background: #fff; }
.win-search input { flex: 1; min-width: 0; margin-left: 10px; }
.win-search input::placeholder { color: #333; opacity: 1; }
.apps { display: flex; margin-left: 3px; }
.apps button { position: relative; width: 49px; height: 40px; }
.run::after { content: ""; position: absolute; left: 4px; right: 4px; bottom: 0; height: 2px; background: #0078d7; }
.apps .alert { background: #f6b27c; border-right: 3px solid #e0a070; }
.apps .alert::after { left: 0; right: -3px; background: #ff7200; }
.apps .current { background: #ecf2f7; }
.apps .current::after { left: 0; right: 0; }
.tray { display: flex; align-items: center; gap: 9px; margin-left: auto; padding-right: 4px; }
.weather { gap: 10px; margin-right: 16px; font-size: 13px; }
.ime { font-size: 12px; }
.clock { flex-direction: column; width: 66px; font-size: 11px; white-space: nowrap; }
.notif { width: 43px; height: 40px; padding-right: 6px; border-right: 1px solid #9fa9b8; }
```
